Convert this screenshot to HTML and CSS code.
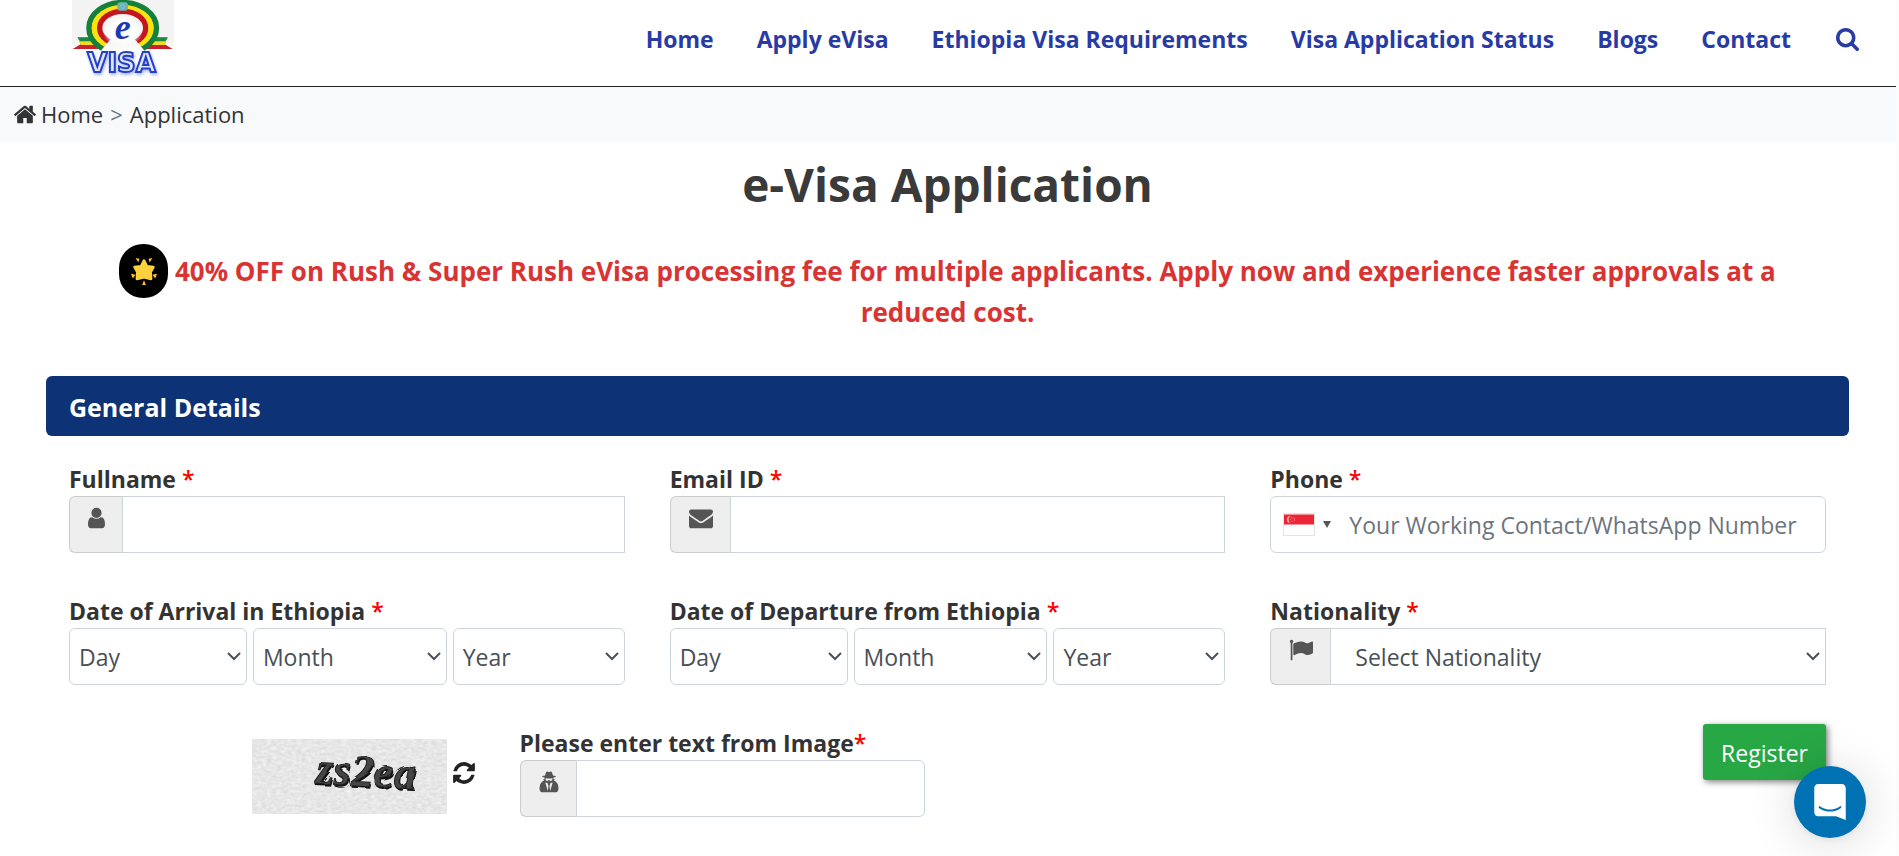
FILE: index.html
```html
<!DOCTYPE html>
<html lang="en">
<head>
<meta charset="utf-8">
<title>e-Visa Application</title>
<link rel="stylesheet" href="styles.css">
</head>
<body>
<header class="site-header">
  <a class="logo" href="#" aria-label="eVisa home">
    <svg viewBox="36 0 306 234" width="102" height="78">
      <defs>
        <linearGradient id="plate" x1="0" y1="0" x2="0" y2="1"><stop offset="0.8" stop-color="#f3f3f4"/><stop offset="1" stop-color="#fff"/></linearGradient>
        <radialGradient id="glow"><stop offset="0.6" stop-color="#fff"/><stop offset="1" stop-color="#fff" stop-opacity="0"/></radialGradient>
        <clipPath id="arch"><path d="M36-10H342V160H256L250 148 228 122 188 84 148 122 126 148 120 160H36Z"/></clipPath>
      </defs>
      <rect x="36" y="0" width="306" height="154" fill="url(#plate)"/>
      <path d="M54 113h50l12 34H38l24-14Z" fill="#c8202c"/><path d="M54 113h50v22H62Z" fill="#f4dc1c"/><path d="M52 112h52v12H60Z" fill="#1a8a42"/>
      <path d="M322 113h-50l-12 34h78l-24-14Z" fill="#c8202c"/><path d="M322 113h-50v22h42Z" fill="#f4dc1c"/><path d="M324 112h-52v12h44Z" fill="#1a8a42"/>
      <g clip-path="url(#arch)" fill="none">
        <ellipse cx="188" cy="84" rx="101" ry="76" stroke="#14803c" stroke-width="17"/>
        <ellipse cx="188" cy="84" rx="85" ry="62" stroke="#fbe20e" stroke-width="16"/>
        <ellipse cx="188" cy="84" rx="69" ry="50" stroke="#c4141f" stroke-width="16"/>
      </g>
      <ellipse cx="188" cy="94" rx="60" ry="50" fill="url(#glow)"/>
      <rect x="172" y="7" width="32" height="25" rx="9" fill="#6fb2b4"/><circle cx="188" cy="19" r="6" fill="none" stroke="#8fc7e0" stroke-width="2"/>
      <text x="164" y="118" class="logo-e">e</text>
      <text x="82" y="215" class="logo-word">VISA</text>
    </svg>
  </a>
  <nav class="main-nav" aria-label="Main">
    <a href="#">Home</a>
    <a href="#">Apply eVisa</a>
    <a href="#">Ethiopia Visa Requirements</a>
    <a href="#">Visa Application Status</a>
    <a href="#">Blogs</a>
    <a href="#">Contact</a>
    <a class="search" href="#" aria-label="Search"><svg viewBox="64 128 1664 1664" width="23" height="23"><path fill="currentColor" d="M1216 832q0-185-131.5-316.5t-316.5-131.5-316.5 131.5-131.5 316.5 131.5 316.5 316.5 131.5 316.5-131.5 131.5-316.5zm512 832q0 52-38 90t-90 38q-54 0-90-38l-343-342q-179 124-399 124-143 0-273.5-55.5t-225-150-150-225-55.5-273.5 55.5-273.5 150-225 225-150 273.5-55.5 273.5 55.5 225 150 150 225 55.5 273.5q0 220-124 399l343 343q37 37 37 90z"/></svg></a>
  </nav>
</header>
<nav class="breadcrumb" aria-label="Breadcrumb">
  <a href="#"><svg viewBox="88 128 1616 1536" width="22" height="21"><path fill="currentColor" d="M1472 992v480q0 26-19 45t-45 19h-384v-384h-256v384h-384q-26 0-45-19t-19-45v-480q0-1 .5-3t.5-3l575-474 575 474q1 2 1 6zm223-69l-62 74q-8 9-21 11h-3q-13 0-21-7l-692-577-692 577q-12 8-24 7-13-2-21-11l-62-74q-8-10-7-23.5t11-21.5l719-599q32-26 76-26t76 26l244 204v-195q0-14 9-23t23-9h192q14 0 23 9t9 23v408l219 182q10 8 11 21.5t-7 23.5z"/></svg>Home</a>
  <span class="sep">&gt;</span>
  <span>Application</span>
</nav>
<main class="content">
  <h1>e-Visa Application</h1>
  <p class="promo"><span class="star"><svg viewBox="0 0 30 30" width="28" height="28"><path fill="#fdd23c" stroke="#fdd23c" stroke-width="3" stroke-linejoin="round" d="M15 4l3 6 7 .8-3 5.200.5 7.500-7.500-2-7.500 2 .5-7.500L5 10.800 12 10z"/><g fill="#fdc32e"><path d="M6 1l4 1-1 4zM24 1l-4 1 1 4zM1 18l5 1-3 4zM29 18l-5 1 3 4zM15 25l2 5h-4z"/></g></svg></span> 40% OFF on Rush &amp; Super Rush eVisa processing fee for multiple applicants. Apply now and experience faster approvals at a reduced cost.</p>
  <h2>General Details</h2>
  <form class="form">
    <div class="row">
      <div class="field">
        <label for="fullname">Fullname <b>*</b></label>
        <div class="group">
          <span class="addon"><svg viewBox="256 0 1280 1792" width="17" height="24"><path fill="currentColor" d="M1536 1399q0 109-62.5 187t-150.500 78h-854q-88 0-150.500-78t-62.500-187q0-85 8.500-160.500t31.500-152 58.500-131 94-89 134.500-34.500q131 128 313 128t313-128q76 0 134.500 34.500t94 89 58.500 131 31.500 152 8.500 160.500zm-256-887q0 159-112.500 271.500t-271.500 112.500-271.500-112.500-112.500-271.500 112.500-271.500 271.500-112.500 271.500 112.500 112.500 271.500z"/></svg></span>
          <input id="fullname" type="text">
        </div>
      </div>
      <div class="field">
        <label for="email">Email ID <b>*</b></label>
        <div class="group">
          <span class="addon"><svg viewBox="0 0 1792 1792" width="24" height="24"><path fill="currentColor" d="M1792 710v794q0 66-47 113t-113 47h-1472q-66 0-113-47t-47-113v-794q44 49 101 87 362 246 497 345 57 42 92.500 65.500t94.500 48 110 24.500h2q51 0 110-24.500t94.500-48 92.500-65.500q170-123 498-345 57-39 100-87zm0-294q0 79-49 151t-122 123q-376 261-468 325-10 7-42.500 31t-54 38.500-52 32.500-57.500 27-50 9h-2q-23 0-50-9t-57.500-27-52-32.500-54-38.500-42.500-31q-91-64-262-182.500t-205-142.500q-62-42-117-115.500t-55-136.500q0-78 41.500-130t118.500-52h1472q65 0 112.500 47t47.500 113z"/></svg></span>
          <input id="email" type="email">
        </div>
      </div>
      <div class="field">
        <label for="phone">Phone <b>*</b></label>
        <div class="phone">
          <button class="country" type="button" aria-label="Country code"><svg class="flag" viewBox="0 0 30 20" width="30" height="21"><path fill="#fff" d="M0 0h30v20H0z"/><path fill="#ee2536" d="M0 0h30v10H0z"/><path fill="#fbb" d="M6.500 1.500a3.500 3.500 0 1 0 0 7 4 4 0 0 1 0-7z"/><circle cx="8.500" cy="5" r="2" fill="none" stroke="#fbb" stroke-dasharray="1 1.500"/></svg><svg viewBox="0 0 8 7" width="8" height="7"><path fill="#555" d="M0 0h8L4 7z"/></svg></button>
          <input id="phone" type="tel" placeholder="Your Working Contact/WhatsApp Number">
        </div>
      </div>
    </div>
    <div class="row">
      <fieldset class="field">
        <legend>Date of Arrival in Ethiopia <b>*</b></legend>
        <div class="dates">
          <span class="pick"><select aria-label="Arrival day"><option>Day</option></select><svg viewBox="0 0 14 9" width="14" height="9"><path d="M1 1l6 6 6-6"/></svg></span>
          <span class="pick"><select aria-label="Arrival month"><option>Month</option></select><svg viewBox="0 0 14 9" width="14" height="9"><path d="M1 1l6 6 6-6"/></svg></span>
          <span class="pick"><select aria-label="Arrival year"><option>Year</option></select><svg viewBox="0 0 14 9" width="14" height="9"><path d="M1 1l6 6 6-6"/></svg></span>
        </div>
      </fieldset>
      <fieldset class="field">
        <legend>Date of Departure from Ethiopia <b>*</b></legend>
        <div class="dates">
          <span class="pick"><select aria-label="Departure day"><option>Day</option></select><svg viewBox="0 0 14 9" width="14" height="9"><path d="M1 1l6 6 6-6"/></svg></span>
          <span class="pick"><select aria-label="Departure month"><option>Month</option></select><svg viewBox="0 0 14 9" width="14" height="9"><path d="M1 1l6 6 6-6"/></svg></span>
          <span class="pick"><select aria-label="Departure year"><option>Year</option></select><svg viewBox="0 0 14 9" width="14" height="9"><path d="M1 1l6 6 6-6"/></svg></span>
        </div>
      </fieldset>
      <div class="field">
        <label for="nationality">Nationality <b>*</b></label>
        <div class="group">
          <span class="addon"><svg viewBox="0 0 1792 1792" width="24" height="24"><path fill="currentColor" d="M320 256q0 72-64 110v1266q0 13-9.500 22.500t-22.500 9.500h-64q-13 0-22.500-9.500t-9.500-22.500v-1266q-64-38-64-110 0-53 37.500-90.500t90.500-37.500 90.500 37.500 37.500 90.500zm1472 64v763q0 25-12.500 38.500t-39.500 27.500q-215 116-369 116-61 0-123.500-22t-108.500-48-115.500-48-142.500-22q-192 0-464 146-17 9-33 9-26 0-45-19t-19-45v-742q0-32 31-55 21-14 79-43 236-120 421-120 107 0 200 29t219 88q38 19 88 19 54 0 117.500-21t110-47 88-47 54.500-21q26 0 45 19t19 45z"/></svg></span>
          <span class="pick wide"><select id="nationality"><option>Select Nationality</option></select><svg viewBox="0 0 14 9" width="14" height="9"><path d="M1 1l6 6 6-6"/></svg></span>
        </div>
      </div>
    </div>
    <div class="row last">
      <div class="captcha">
        <svg class="captcha-image" viewBox="0 0 195 75" width="195" height="75" role="img" aria-label="Captcha">
          <defs>
            <filter id="paper" x="0" y="0" width="1" height="1"><feTurbulence type="fractalNoise" baseFrequency="0.200 0.350" numOctaves="3" seed="4"/><feColorMatrix values="0.250 0 0 0 0.670  0.250 0 0 0 0.670  0.250 0 0 0 0.670  0 0 0 0 1"/></filter>
            <filter id="warp"><feTurbulence type="turbulence" baseFrequency="0.050" numOctaves="1" seed="8"/><feDisplacementMap in="SourceGraphic" scale="4"/></filter>
          </defs>
          <rect width="195" height="75" fill="#dcdcdc" filter="url(#paper)"/>
          <g filter="url(#warp)">
            <text class="captcha-shadow" x="63" y="45" transform="rotate(3 63 45)">zs2ea</text>
            <text class="captcha-text" x="62" y="43" transform="rotate(3 62 43)">zs2ea</text>
          </g>
        </svg>
        <button class="refresh" type="button" aria-label="New image"><svg viewBox="120 120 1552 1552" width="22" height="22"><path fill="currentColor" d="M1639 1056q0 5-1 7-64 268-268 434.500t-478 166.500q-146 0-282.500-55t-243.500-157l-129 129q-19 19-45 19t-45-19-19-45v-448q0-26 19-45t45-19h448q26 0 45 19t19 45-19 45l-137 137q71 66 161 102t187 36q134 0 250-65t186-179q11-17 53-117 8-23 30-23h192q13 0 22.500 9.500t9.500 22.500zm25-800v448q0 26-19 45t-45 19h-448q-26 0-45-19t-19-45 19-45l138-138q-148-137-349-137-134 0-250 65t-186 179q-11 17-53 117-8 23-30 23h-199q-13 0-22.500-9.500t-9.500-22.500v-7q65-268 270-434.500t480-166.500q146 0 284 55.500t245 156.500l130-129q19-19 45-19t45 19 19 45z"/></svg></button>
      </div>
      <div class="field">
        <label for="code">Please enter text from Image<b>*</b></label>
        <div class="group round">
          <span class="addon"><svg viewBox="0 0 20 24" width="20" height="24"><path fill="currentColor" fill-rule="evenodd" d="M6 5.500L7 2.500Q7.500 1 9 1.700q1 .5 2 0 1.500-.7 2 .8l1 3q3 .4 3 1.100 0 .6-2.500 1v1.600h1.300L15 10.500Q19.500 12.500 19.500 18q0 4-2.500 4.300H3Q.500 22 .500 18 .500 12.500 5 10.500L4.200 9.200h1.300V7.600Q3 7.200 3 6.600q0-.7 3-1.100zM6.500 8.300v.9q.5 2 2.200 1.700L10 9.700l1.300 1.200q1.700.3 2.200-1.700v-.9q-3.500.5-7 0zM6.300 12.500l2.500 8.500.7-5-1-3zM13.700 12.500L11.200 21l-.7-5 1-3z"/></svg></span>
          <input id="code" type="text">
        </div>
      </div>
      <div class="actions"><button class="register" type="submit">Register</button></div>
    </div>
  </form>
</main>
<button class="chat" type="button" aria-label="Open chat"><svg viewBox="0 0 28 32" width="32" height="36"><path fill="#fff" d="M28 32s-4.714-1.855-8.527-3.340H3.437C1.540 28.660 0 27.026 0 25.013V3.644C0 1.633 1.540 0 3.437 0h21.125c1.898 0 3.437 1.632 3.437 3.645v18.404H28V32zm-4.139-11.982a.88.88 0 00-1.292-.105c-.03.026-3.015 2.681-8.570 2.681-5.486 0-8.517-2.636-8.571-2.684a.88.88 0 00-1.290.107 1.010 1.010 0 00-.219.708.992.992 0 00.318.664c.142.128 3.537 3.150 9.762 3.150 6.226 0 9.621-3.022 9.763-3.150a.992.992 0 00.317-.664 1.010 1.010 0 00-.218-.707z"/></svg></button>
</body>
</html>
```
FILE: styles.css
```css
* { box-sizing: border-box; }
html { background: #fcfcfc; }
body {
  margin: 0 3px 0 0;
  min-height: 100vh;
  background: #fff;
  color: #333;
  font: 23px/36px "Open Sans", "Noto Sans", sans-serif;
  overflow-x: hidden;
}
a { color: inherit; text-decoration: none; }
svg { display: block; }
button, input, select { font: inherit; color: inherit; margin: 0; }

.site-header {
  display: flex;
  justify-content: space-between;
  height: 87px;
  padding: 0 37px 0 72px;
  border-bottom: 1px solid #212529;
}
.logo svg { overflow: visible; }
.logo-e { font: italic bold 108px "Liberation Serif", serif; fill: #1c37b8; }
.logo-word { font: bold 78px "DejaVu Sans", sans-serif; fill: #dfe6fb; stroke: #2440c4; stroke-width: 6; filter: drop-shadow(3px 6px 4px #aab8f4); }
.main-nav { display: flex; align-items: center; gap: 43px; padding-bottom: 8px; color: #283ba5; font-weight: 700; }
.search { margin-left: 2px; }

.breadcrumb { display: flex; gap: 7px; height: 55px; padding: 9px 14px; background: #f8f9fb; font-size: 22px; }
.breadcrumb a { display: flex; align-items: center; gap: 5px; height: 36px; }
.sep { color: #6c757d; }

.content { padding: 0 47px 0 46px; }
h1 { margin: 13px 0 0; font-size: 46px; line-height: 58px; font-weight: 700; text-align: center; color: #3a3a3a; }
.promo { margin: 38px 70px 0; color: #d93434; font-size: 26px; line-height: 41px; font-weight: 700; text-align: center; }
.star { display: inline-flex; align-items: center; justify-content: center; width: 49px; height: 54px; margin: -9px 0; border-radius: 24px; background: #000; vertical-align: text-bottom; }
h2 { margin: 43px 0 24px; padding: 13px 23px 11px; border-radius: 6px; background: #0d3276; color: #fff; font-size: 25px; line-height: 36px; font-weight: 700; }

.row { display: grid; grid-template-columns: repeat(3, 1fr); gap: 45px; margin: 0 23px 39px; }
.row.last { grid-template-columns: repeat(4, 1fr); margin-bottom: 0; }
.field { min-width: 0; margin: 0; padding: 0; border: 0; }
.field label, .field legend { display: block; padding: 2px 0 0; line-height: 34px; font-weight: 700; white-space: nowrap; }
.field b { color: #f00; font-weight: 600; }
.group { display: flex; height: 57px; }
.addon { flex: none; padding: 9px 17px 9px 18px; border: 1px solid #ccc; border-right: 0; border-radius: 6px 0 0 6px; background: #eee; color: #555; }
input { flex: 1; min-width: 0; width: 100%; padding: 0 18px; border: 1px solid #ced4da; border-radius: 0; background: #fff; }
.round input { border-radius: 0 6px 6px 0; }
.phone { display: flex; height: 57px; border: 1px solid #ced4da; border-radius: 6px; }
.phone input { border: 0; background: none; padding: 0 9px 0 18px; }
.phone input::placeholder { color: #6c757d; opacity: 1; }
.country { display: flex; align-items: center; gap: 9px; padding: 0 0 0 13px; border: 0; background: none; }
.flag { outline: 1px solid #e4e4e4; }
.dates { display: grid; grid-template-columns: 178fr 194fr 172fr; gap: 6px; }
.pick { display: grid; align-items: center; height: 57px; }
.pick > * { grid-area: 1 / 1; }
.pick select { width: 100%; height: 57px; padding: 0 9px; border: 1px solid #ced4da; border-radius: 6px; background: #fff; color: #495057; appearance: none; }
.pick svg { justify-self: end; margin-right: 6px; pointer-events: none; fill: none; stroke: #495057; stroke-width: 2; }
.pick.wide { flex: 1; }
.pick.wide select { border-radius: 0; padding: 0 24px; }

.captcha { display: flex; justify-content: flex-end; gap: 6px; padding-top: 15px; }
.captcha-text, .captcha-shadow { font: italic bold 45px "Liberation Serif", serif; }
.captcha-text { fill: #444; stroke: #222; }
.captcha-shadow { fill: #111; }
.refresh { align-self: flex-start; margin-top: 23px; padding: 0; border: 0; background: none; color: #222; }
.actions { grid-column: span 2; text-align: right; }
.register { height: 56px; padding: 2px 18px 0; border: 0; border-radius: 3px; background: #28a745; color: #fff; box-shadow: 2px 2px 6px rgba(0, 0, 0, 0.5); }

.chat { position: fixed; right: 33px; bottom: 18px; display: grid; place-items: center; width: 72px; height: 72px; padding: 0; border: 0; border-radius: 50%; background: #0071b2; box-shadow: 0 2px 9px rgba(0, 0, 0, 0.06), 0 3px 48px rgba(0, 0, 0, 0.16); }
```
